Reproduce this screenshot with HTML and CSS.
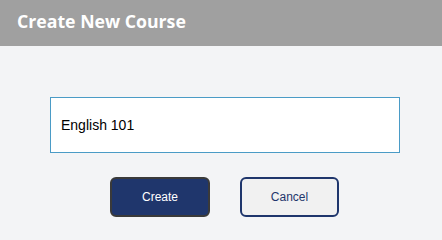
FILE: index.html
```html
<!DOCTYPE html>
<html>
<head>
<meta charset="utf-8">
<link rel="stylesheet" href="styles.css">
</head>
<body>
<header class="header"><h1 class="title">Create New Course</h1></header>
<main class="content">
  <div class="field">English 101</div>
  <div class="actions">
    <button class="btn btn-primary">Create</button>
    <button class="btn btn-secondary">Cancel</button>
  </div>
</main>
</body>
</html>
```
FILE: styles.css
```css
html, body { margin: 0; padding: 0; }
body {
  width: 442px;
  height: 235px;
  background: #f3f4f6;
  font-family: "Liberation Sans", Arial, sans-serif;
  overflow: hidden;
}
.header {
  height: 46px;
  background: #a0a0a0;
  display: flex;
  align-items: center;
  padding-left: 17px;
  box-sizing: border-box;
}
.title {
  margin: 0;
  color: #ffffff;
  font-family: "Open Sans", "Noto Sans", sans-serif;
  font-weight: 700;
  font-size: 17.7px;
  line-height: 1;
  position: relative;
  top: -1px;
}
.content {
  padding: 51px 0 0 50px;
}
.field {
  width: 350px;
  height: 56px;
  box-sizing: border-box;
  border: 1px solid #4a9bc6;
  background: #ffffff;
  display: flex;
  align-items: center;
  padding-left: 10px;
  font-size: 14px;
  color: #000000;
}
.actions {
  display: flex;
  gap: 30px;
  margin-top: 24px;
  padding-left: 60px;
}
.btn {
  width: 100px;
  height: 40px;
  border-radius: 6px;
  font-family: "Liberation Sans", Arial, sans-serif;
  font-size: 12px;
  padding: 0;
  box-sizing: border-box;
}
.btn-primary {
  background: #1f366c;
  color: #ffffff;
  border: 2px solid #3a3a3a;
}
.btn-secondary {
  width: 99px;
  background: #f1f1f1;
  color: #1f366c;
  border: 2px solid #1f366c;
}
```
